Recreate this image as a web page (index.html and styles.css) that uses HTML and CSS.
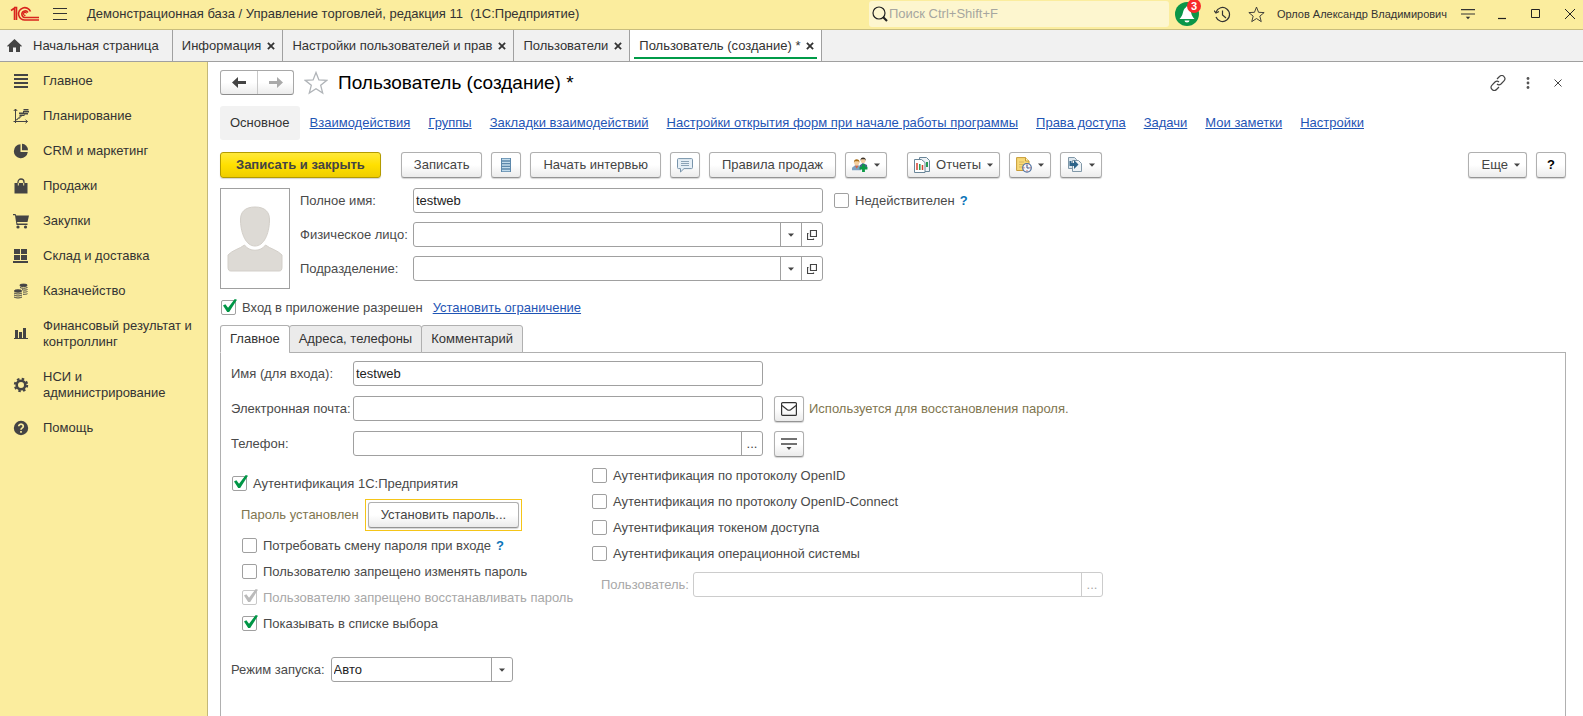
FILE: index.html
```
<!DOCTYPE html>
<html lang="ru">
<head>
    <meta charset="UTF-8">
    <meta name="viewport" content="width=device-width, initial-scale=1.0">
    <title>Пользователь (создание) *</title>
    <link rel="stylesheet" href="styles.css">
</head>
<body>
    <!-- Shared icons -->
    <svg class="sprite" aria-hidden="true">
        <symbol id="i-close" viewBox="0 0 9 9"><path d="M1 1l7 7M8 1l-7 7" stroke="currentColor" stroke-width="2" fill="none"/></symbol>
        <symbol id="i-down" viewBox="0 0 6 4"><path d="M0 0.500h6L3 3.700z" fill="currentColor"/></symbol>
        <symbol id="i-open" viewBox="0 0 10 10"><path d="M3.500 0.500h6v6h-6zM1.500 3.500h-1v6h6v-1" stroke="currentColor" fill="none" stroke-width="1.200"/></symbol>
        <symbol id="i-star" viewBox="0 0 24 24"><path d="M12 1.500l2.900 7.400 7.900.4-6.100 5 2 7.800L12 17.700l-6.700 4.400 2-7.800-6.100-5 7.900-.4z" fill="none" stroke="currentColor" stroke-width="1.300" stroke-linejoin="miter"/></symbol>
        <symbol id="i-menu" viewBox="0 0 16 12"><path d="M0 1h16M0 6h16" stroke="currentColor" stroke-width="1.300"/><path d="M5.500 9h5L8 12z" fill="currentColor"/></symbol>
    </svg>

    <header class="topbar">
        <svg class="logo" viewBox="0 0 30 16" fill="none" stroke="#d9251d">
            <path d="M1 4.500L4.500 2v12M4 1.500h2.500V14" stroke-width="1.600"/>
            <path d="M20.500 5.500A6.200 6.200 0 1 0 15.500 14H29" stroke-width="1.600"/>
            <path d="M18 6.500a3.300 3.300 0 1 0-2.500 5H29" stroke-width="1.600"/>
            <path d="M16.500 7.500a1.500 1.500 0 1 0-1 1.800" stroke-width="1.200"/>
        </svg>
        <button class="icon-btn burger" aria-label="Меню"><svg width="14" height="12" viewBox="0 0 14 12"><path d="M0 .5h14M0 5.500h14M0 11.500h14" stroke="#333"/></svg></button>
        <div class="app-title">Демонстрационная база / Управление торговлей, редакция 11 &nbsp;(1С:Предприятие)</div>
        <label class="search">
            <svg width="16" height="16" viewBox="0 0 16 16" fill="none" stroke="#222"><circle cx="7" cy="7" r="6" stroke-width="1.200"/><path d="M11 11l4 4" stroke-width="2.200"/></svg>
            <input type="text" placeholder="Поиск Ctrl+Shift+F" aria-label="Поиск">
        </label>
        <div class="top-tools">
            <button class="icon-btn bell" aria-label="Оповещения">
                <svg width="24" height="24" viewBox="0 0 24 24"><circle cx="12" cy="12" r="12" fill="#0a9648"/><path d="M12 4l1.200 1.500c1.800 1 2.300 3 3 5.500.6 2.300 1.300 4 3.300 6h-15c2-2 2.700-3.700 3.300-6 .7-2.500 1.200-4.500 3-5.500zM9.500 18.500h5a2.500 2 0 0 1-5 0z" fill="#fff"/></svg>
                <span class="badge">3</span>
            </button>
            <button class="icon-btn" aria-label="История"><svg width="17" height="17" viewBox="0 0 17 17" fill="none" stroke="#333" stroke-width="1.200"><path d="M2 6a7 7 0 1 1 0 5M8.500 4.500v4.500l3.500 3"/><path d="M0 4.500L2 7l3-1.500"/></svg></button>
            <button class="icon-btn" aria-label="Избранное"><svg width="17" height="17"><use href="#i-star"/></svg></button>
            <a class="user-name" href="#">Орлов Александр Владимирович</a>
            <button class="icon-btn" aria-label="Сервис"><svg width="14" height="14"><use href="#i-menu"/></svg></button>
            <button class="icon-btn" aria-label="Свернуть"><svg width="10" height="14" viewBox="0 0 10 14"><path d="M1 11.500h8" stroke="#222" stroke-width="1.200"/></svg></button>
            <button class="icon-btn" aria-label="Развернуть"><svg width="10" height="10" viewBox="0 0 10 10"><path d="M.5.5h8v8h-8z" fill="none" stroke="#222"/></svg></button>
            <button class="icon-btn" aria-label="Закрыть"><svg width="12" height="12" viewBox="0 0 12 12"><path d="M1 1l10 10M11 1L1 11" stroke="#222" fill="none"/></svg></button>
        </div>
    </header>

    <nav class="window-tabs">
        <a class="window-tab home" href="#"><svg width="15" height="13" viewBox="0 0 15 13"><path d="M7.500 0L15 7l-1 .8-1-.8v6H9V8.500H6V13H2V7l-1 .8L0 7z" fill="#444"/></svg>Начальная страница</a>
        <a class="window-tab" href="#">Информация<svg width="8" height="8"><use href="#i-close"/></svg></a>
        <a class="window-tab" href="#">Настройки пользователей и прав<svg width="8" height="8"><use href="#i-close"/></svg></a>
        <a class="window-tab" href="#">Пользователи<svg width="8" height="8"><use href="#i-close"/></svg></a>
        <a class="window-tab active" href="#">Пользователь (создание) *<svg width="8" height="8"><use href="#i-close"/></svg></a>
    </nav>

    <div class="workspace">
        <nav class="sidebar">
            <a href="#"><svg viewBox="0 0 16 16"><path d="M1 2h14M1 6h14M1 10h14M1 14h14" stroke="#444" stroke-width="2"/></svg>Главное</a>
            <a href="#"><svg viewBox="0 0 16 16"><path d="M2.500 1v14M.5 13.500h14M.8 3l1.700-2 1.700 2M12.500 11.800l2 1.700-2 1.700M3 12l2-1v-1h2V8h2" fill="none" stroke="#444"/><path d="M6 4.500h5v1.500H6zM6.500 6.500h5V8h-5zM10.500 1h5v1.500h-5zM10 3h6v1.500h-6zM11 5h4v1.500h-4z" fill="#444"/></svg>Планирование</a>
            <a href="#"><svg viewBox="0 0 16 16"><path d="M7.500 1.200A7 7 0 1 0 14.800 9H7.500z" fill="#444"/><path d="M9 0.800A6.500 6.500 0 0 1 15 7.200H9z" fill="#444"/></svg>CRM и маркетинг</a>
            <a href="#"><svg viewBox="0 0 16 16"><path d="M1.500 5h13v10.500h-13z" fill="#444"/><path d="M5 7V4a3 3 0 0 1 6 0v3" fill="none" stroke="#444" stroke-width="1.300"/><path d="M5.300 5v2.500M10.700 5v2.500" stroke="#fbed9e"/></svg>Продажи</a>
            <a href="#"><svg viewBox="0 0 16 16"><path d="M0 1h2.500l.7 1.500H16L14.500 9H4l.5 1.500h10V12H3.500L2 2.300H0z" fill="#444"/><path d="M3.500 3H15l-1.200 5.500H4.300z" fill="#444"/><circle cx="5" cy="14" r="1.600" fill="#444"/><circle cx="12.500" cy="14" r="1.600" fill="#444"/></svg>Закупки</a>
            <a href="#"><svg viewBox="0 0 16 16"><path d="M1 1h6v5H1zM8 1h6v5H8zM1 7h6v5H1zM8 7h6v5H8zM0 13h15v2H0z" fill="#444"/></svg>Склад и доставка</a>
            <a href="#"><svg viewBox="0 0 16 16" fill="none" stroke="#444"><ellipse cx="10.500" cy="2.300" rx="3.700" ry="1.200" fill="#444"/><path d="M7 4.500c2 1 5 1 7.500 0M9 6.700c2 .6 4 .5 5.500-.2M10 9c1.500.3 3.500 0 4.500-.5M10 11.200c1.500.3 3.500 0 4.500-.5"/><ellipse cx="5" cy="8" rx="3.700" ry="1.200" fill="#444"/><path d="M1 10c2 1.300 6 1.300 8 0M1 12c2 1.300 6 1.300 8 0M1 14c2 1.300 6 1.300 8 0"/></svg>Казначейство</a>
            <a href="#"><svg viewBox="0 0 16 16"><path d="M2 4h3v8H2zM6 6h3v6H6zM10 2h3v10h-3zM1 12h14v1H1z" fill="#444"/></svg>Финансовый результат и контроллинг</a>
            <a href="#"><svg viewBox="0 0 16 16" fill="none" stroke="#444"><circle cx="8" cy="8" r="4.300" stroke-width="2.600"/><circle cx="8" cy="8" r="6.200" stroke-width="2" stroke-dasharray="2.500 2.369"/></svg>НСИ и администрирование</a>
            <a href="#"><svg viewBox="0 0 16 16"><circle cx="8" cy="8" r="7.200" fill="#444"/><path d="M5.700 6.200a2.300 2.100 0 1 1 3.400 1.900c-.8.5-1.100.8-1.100 1.700M8 11v1.800" fill="none" stroke="#fbed9e" stroke-width="1.700"/></svg>Помощь</a>
        </nav>

        <main class="form">
            <div class="form-head">
                <div class="history">
                    <button aria-label="Назад"><svg width="14" height="11" viewBox="0 0 14 11"><path d="M0 5.500L6 0v4h8v3H6v4z" fill="#444"/></svg></button>
                    <button aria-label="Вперед"><svg width="14" height="11" viewBox="0 0 14 11"><path d="M14 5.500L8 0v4H0v3h8v4z" fill="#aaa"/></svg></button>
                </div>
                <button class="icon-btn favorite" aria-label="В избранное"><svg width="24" height="24"><use href="#i-star"/></svg></button>
                <h1>Пользователь (создание) *</h1>
                <div class="head-tools">
                    <button class="icon-btn" aria-label="Ссылка"><svg width="16" height="16" viewBox="0 0 16 16" fill="none" stroke="#444" stroke-width="1.200"><path d="M7 4l2.500-2.500a3 3 0 0 1 4.700.300 3 3 0 0 1-.2 4L11 9a3 3 0 0 1-4 0M9 12l-2.500 2.500a3 3 0 0 1-4.700-.300 3 3 0 0 1 .2-4L5 7a3 3 0 0 1 4 0"/></svg></button>
                    <button class="icon-btn" aria-label="Еще"><svg width="4" height="12" viewBox="0 0 4 12" fill="#555"><circle cx="2" cy="1.500" r="1.400"/><circle cx="2" cy="6" r="1.400"/><circle cx="2" cy="10.500" r="1.400"/></svg></button>
                    <button class="icon-btn" aria-label="Закрыть форму"><svg width="8" height="8" viewBox="0 0 8 8"><path d="M.5.5l7 7M7.500.5l-7 7" stroke="#444" fill="none"/></svg></button>
                </div>
            </div>

            <nav class="form-nav">
                <span class="current">Основное</span>
                <a href="#">Взаимодействия</a>
                <a href="#">Группы</a>
                <a href="#">Закладки взаимодействий</a>
                <a href="#">Настройки открытия форм при начале работы программы</a>
                <a href="#">Права доступа</a>
                <a href="#">Задачи</a>
                <a href="#">Мои заметки</a>
                <a href="#">Настройки</a>
            </nav>

            <div class="toolbar">
                <button class="btn primary">Записать и закрыть</button>
                <button class="btn">Записать</button>
                <button class="btn square" aria-label="Список"><svg width="10" height="14" viewBox="0 0 10 14"><path d="M0 0h10v14H0z" fill="#5d88ab"/><path d="M1 1.500h8M1 4.300h8M1 7h8M1 9.700h8M1 12.500h8" stroke="#c3dcec" stroke-width="1.300"/></svg></button>
                <button class="btn">Начать интервью</button>
                <button class="btn square" aria-label="Обсуждение"><svg width="16" height="15" viewBox="0 0 16 15"><path d="M1.500.6h13a1 1 0 0 1 1 1v8a1 1 0 0 1-1 1H7L3.500 14v-3.400h-2a1 1 0 0 1-1-1v-8a1 1 0 0 1 1-1z" fill="#e6eff6" stroke="#7894ab"/><path d="M4 3.500h8M4 5.500h8M4 7.500h8" stroke="#8ba3b6"/></svg></button>
                <button class="btn">Правила продаж</button>
                <button class="btn menu" aria-label="Участники">
                    <svg width="16" height="16" viewBox="0 0 17 16"><path d="M8 11V8.500L11.500 6 16 8v4H8z" fill="#47658b"/><circle cx="11.800" cy="3.500" r="2.600" fill="#f3cfa3"/><path d="M9 3.500C9 1 10 0 11.800 0s2.900 1 2.900 3.500L13.500 2H10z" fill="#3c3227"/><path d="M0 13.500V11l3-2.500h4L9.500 11v2.500z" fill="#7da2c3"/><path d="M3 8.500h4L5 12z" fill="#d46745"/><circle cx="5" cy="5.500" r="2.700" fill="#f5d0a0"/><path d="M2 5.500C2 3 3.200 2 5 2s3 1 3 3.500L6.800 4H3z" fill="#a86e18"/><path d="M8 9.800h2.700V7.200h3v2.600h2.700v3h-2.700v2.700h-3v-2.700H8z" fill="#0b9a45"/></svg>
                    <svg width="6" height="4"><use href="#i-down"/></svg>
                </button>
                <button class="btn menu reports">
                    <svg width="16" height="16" viewBox="0 0 16 16"><path d="M5.500.5h7l3 3v11h-10z" fill="#eef3f6" stroke="#6a8699"/><path d="M12 5h2v5h-2z" fill="#259a51"/><path d="M.5 2.500h7l3.500 3v10H.5z" fill="#fff" stroke="#6a8699"/><path d="M3 6v7M8.500 8v5" stroke="#d8412f" stroke-width="1.500"/><path d="M5.800 7v6" stroke="#259a51" stroke-width="1.500"/></svg>
                    Отчеты
                    <svg width="6" height="4"><use href="#i-down"/></svg>
                </button>
                <button class="btn menu" aria-label="Напоминание">
                    <svg width="16" height="16" viewBox="0 0 16 16"><path d="M.6.600h9L13 4v9.500H.6z" fill="#f7d978" stroke="#c89c37"/><path d="M9.500.6V4H13" fill="#fff2bd" stroke="#c89c37"/><path d="M3 5h5M3 7.500h4M3 10h3" stroke="#d9b65c"/><circle cx="11" cy="10.800" r="4.300" fill="#f2f6fc" stroke="#4e719f" stroke-width="1.200"/><path d="M11 8v3h2.300" fill="none" stroke="#3b5a8b"/><path d="M11 7.300v1M11 13.300v1M7.500 10.800h1M13.500 10.800h1" stroke="#d23c2b"/></svg>
                    <svg width="6" height="4"><use href="#i-down"/></svg>
                </button>
                <button class="btn menu" aria-label="Создать на основании">
                    <svg width="16" height="16" viewBox="0 0 16 16"><path d="M1.500.5h6l2 2v9h-8z" fill="#dce6ed" stroke="#8198a8"/><path d="M5.500 3.500h6l3 3v8h-9z" fill="#eef3f6" stroke="#8198a8"/><path d="M2.500 4v5H7v3l4.500-4.500L7 3v3H4.500V4z" fill="#2c6389"/></svg>
                    <svg width="6" height="4"><use href="#i-down"/></svg>
                </button>
                <button class="btn menu more">Еще<svg width="6" height="4"><use href="#i-down"/></svg></button>
                <button class="btn square help">?</button>
            </div>

            <section class="person">
                <div class="photo">
                    <svg width="56" height="66" viewBox="0 0 56 66" fill="#dddad5" stroke="#d3cfc9"><path d="M28 1C18 1 13 6 13.500 15 14 28 19 40 28 40s14-12 14.500-25C43 6 38 1 28 1z"/><path d="M17.500 39C22 46 34 46 38.500 39c5 4 12 5 16.500 10v12c0 3-1 4-3 4H4c-2 0-3-1-3-4V49c4.500-5 11.500-6 16.500-10z"/></svg>
                </div>
                <div class="rows person-rows">
                    <div class="field">
                        <label for="full-name">Полное имя:</label>
                        <div class="box"><input type="text" id="full-name" value="testweb"></div>
                        <label class="check"><input type="checkbox">Недействителен</label>
                        <a class="hint-mark" href="#">?</a>
                    </div>
                    <div class="field">
                        <label for="individual">Физическое лицо:</label>
                        <div class="box">
                            <input type="text" id="individual">
                            <button aria-label="Выбрать"><svg width="6" height="4"><use href="#i-down"/></svg></button>
                            <button aria-label="Открыть"><svg width="10" height="10"><use href="#i-open"/></svg></button>
                        </div>
                    </div>
                    <div class="field">
                        <label for="department">Подразделение:</label>
                        <div class="box">
                            <input type="text" id="department">
                            <button aria-label="Выбрать"><svg width="6" height="4"><use href="#i-down"/></svg></button>
                            <button aria-label="Открыть"><svg width="10" height="10"><use href="#i-open"/></svg></button>
                        </div>
                    </div>
                </div>
            </section>

            <div class="access">
                <label class="check"><input type="checkbox" checked>Вход в приложение разрешен</label>
                <a href="#">Установить ограничение</a>
            </div>

            <div class="page-tabs">
                <button class="page-tab active">Главное</button>
                <button class="page-tab">Адреса, телефоны</button>
                <button class="page-tab">Комментарий</button>
            </div>

            <section class="panel">
                <div class="rows panel-rows">
                    <div class="field">
                        <label for="login">Имя (для входа):</label>
                        <div class="box"><input type="text" id="login" value="testweb"></div>
                    </div>
                    <div class="field">
                        <label for="email">Электронная почта:</label>
                        <div class="box"><input type="text" id="email"></div>
                        <button class="btn square" aria-label="Написать письмо"><svg width="16" height="14" viewBox="0 0 16 14" fill="none" stroke="#333" stroke-width="1.200"><rect x=".6" y=".6" width="14.800" height="12.800" rx="1"/><path d="M1 3.500l5 4q2 1.500 4 0l5-4"/></svg></button>
                        <span class="note">Используется для восстановления пароля.</span>
                    </div>
                    <div class="field">
                        <label for="phone">Телефон:</label>
                        <div class="box">
                            <input type="text" id="phone">
                            <button aria-label="Выбрать">...</button>
                        </div>
                        <button class="btn square" aria-label="Действия"><svg width="16" height="12"><use href="#i-menu"/></svg></button>
                    </div>
                </div>

                <div class="auth">
                    <div class="auth-left">
                        <label class="check"><input type="checkbox" checked>Аутентификация 1С:Предприятия</label>
                        <div class="password">
                            <span class="note">Пароль установлен</span>
                            <div class="focus-ring"><button class="btn">Установить пароль...</button></div>
                        </div>
                        <div class="checks">
                            <div class="check-line">
                                <label class="check"><input type="checkbox">Потребовать смену пароля при входе</label>
                                <a class="hint-mark" href="#">?</a>
                            </div>
                            <label class="check"><input type="checkbox">Пользователю запрещено изменять пароль</label>
                            <label class="check disabled"><input type="checkbox" checked disabled>Пользователю запрещено восстанавливать пароль</label>
                            <label class="check"><input type="checkbox" checked>Показывать в списке выбора</label>
                        </div>
                    </div>
                    <div class="auth-right">
                        <label class="check"><input type="checkbox">Аутентификация по протоколу OpenID</label>
                        <label class="check"><input type="checkbox">Аутентификация по протоколу OpenID-Connect</label>
                        <label class="check"><input type="checkbox">Аутентификация токеном доступа</label>
                        <label class="check"><input type="checkbox">Аутентификация операционной системы</label>
                        <div class="field os-user">
                            <label for="os-user">Пользователь:</label>
                            <div class="box">
                                <input type="text" id="os-user" disabled>
                                <button aria-label="Выбрать" disabled>...</button>
                            </div>
                        </div>
                    </div>
                </div>

                <div class="field launch">
                    <label for="launch-mode">Режим запуска:</label>
                    <div class="box">
                        <select id="launch-mode">
                            <option>Авто</option>
                        </select>
                        <span class="arrow"><svg width="6" height="4"><use href="#i-down"/></svg></span>
                    </div>
                </div>
            </section>
        </main>
    </div>
</body>
</html>
```

FILE: styles.css
```
* {
    box-sizing: border-box;
}

body {
    display: flex;
    flex-direction: column;
    height: 100vh;
    margin: 0;
    overflow: hidden;
    background-color: #fff;
    color: #4a4a4a;
    font-family: "Liberation Sans", Arial, sans-serif;
    font-size: 13px;
    line-height: 16px;
}

button,
input,
select {
    margin: 0;
    padding: 0;
    border: none;
    background: none;
    color: inherit;
    font: inherit;
}

button svg,
a svg {
    flex: none;
}

a {
    color: #1f55b5;
}

.sprite {
    display: none;
}

.icon-btn {
    display: flex;
    align-items: center;
    justify-content: center;
    color: #333;
}

/* Top bar */
.topbar {
    display: flex;
    flex: none;
    align-items: center;
    height: 30px;
    padding: 0 3px 1px 10px;
    background-color: #fbed9e;
    border-bottom: 1px solid #c8bd7e;
    color: #333;
}

.logo {
    width: 30px;
    height: 16px;
}

.burger {
    width: 14px;
    margin: 0 20px 0 13px;
}

.app-title {
    flex: 1;
    white-space: nowrap;
}

.search {
    display: flex;
    align-items: center;
    gap: 1px;
    width: 300px;
    height: 26px;
    padding: 0 3px;
    background-color: #fdf6cf;
    border-radius: 3px;
}

.search input {
    flex: 1;
    min-width: 0;
    outline: none;
}

.search input::placeholder {
    color: #a6a6a0;
}

.top-tools {
    display: flex;
    align-items: center;
    gap: 13px;
    margin-left: 6px;
}

.top-tools .icon-btn {
    width: 21px;
}

.top-tools .bell {
    position: relative;
    width: 24px;
    height: 24px;
}

.badge {
    position: absolute;
    top: -3px;
    right: -2px;
    width: 14px;
    height: 14px;
    background-color: #f72b2b;
    border-radius: 50%;
    color: #fff;
    font-size: 11px;
    font-weight: bold;
    line-height: 14px;
}

.user-name {
    margin: 0 -3px;
    color: #333;
    font-size: 11px;
    text-decoration: none;
    white-space: nowrap;
}

/* Window tabs */
.window-tabs {
    display: flex;
    flex: none;
    height: 32px;
    background-color: #f1f1f1;
    border-bottom: 1px solid #a0a0a0;
}

.window-tab {
    display: flex;
    align-items: center;
    gap: 6px;
    padding: 0 7px 0 9px;
    border-right: 1px solid #a0a0a0;
    color: #333;
    text-decoration: none;
    white-space: nowrap;
}

.window-tab.home {
    gap: 11px;
    padding: 0 13px 0 7px;
}

.window-tab.active {
    background: linear-gradient(#009b48, #009b48) center bottom 2px / calc(100% - 8px) 2px no-repeat #fff;
}

.workspace {
    display: flex;
    flex: 1;
    min-height: 0;
}

/* Sections panel */
.sidebar {
    flex: none;
    width: 208px;
    padding-top: 2px;
    background-color: #fbed9e;
    border-right: 1px solid #c4b878;
}

.sidebar a {
    display: flex;
    align-items: center;
    gap: 14px;
    min-height: 35px;
    padding: 9px 14px 10px 13px;
    color: #333;
    text-decoration: none;
}

.sidebar svg {
    width: 16px;
    height: 16px;
}

/* Form */
.form {
    display: flex;
    flex: 1;
    flex-direction: column;
    min-width: 0;
    padding: 8px 17px 0 12px;
}

.form-head {
    display: flex;
    align-items: center;
    height: 25px;
}

.history {
    display: flex;
    height: 25px;
    border: 1px solid #a8a8a8;
    border-bottom-color: #8c8c8c;
    border-radius: 3px;
    background: linear-gradient(#fff 50%, #ececec);
}

.history button {
    display: flex;
    align-items: center;
    justify-content: center;
    width: 36px;
}

.history button + button {
    border-left: 1px solid #c8c8c8;
}

.favorite {
    margin: 0 10px;
    color: #b0b4b8;
}

h1 {
    margin: 0;
    color: #000;
    font-size: 19px;
    font-weight: normal;
    line-height: 24px;
}

.head-tools {
    display: flex;
    align-items: center;
    gap: 14px;
    margin-left: auto;
}

.head-tools .icon-btn {
    width: 16px;
}

.form-nav {
    display: flex;
    align-items: center;
    gap: 18px;
    height: 34px;
    margin-top: 11px;
    white-space: nowrap;
}

.form-nav .current {
    margin-right: -8px;
    padding: 9px 10px;
    background-color: #f2f2f2;
    border-radius: 3px;
    color: #333;
}

.toolbar {
    display: flex;
    gap: 9px;
    margin-top: 12px;
}

.btn {
    display: flex;
    align-items: center;
    justify-content: center;
    height: 26px;
    padding: 0 12px;
    border: 1px solid #b0b0b0;
    border-bottom-color: #949494;
    border-radius: 3px;
    background: linear-gradient(#fff 50%, #ebebeb);
    box-shadow: 0 1px 1px #d4d4d4;
    color: #444;
    white-space: nowrap;
}

.btn.primary {
    margin-right: 11px;
    padding: 0 15px;
    border-color: #b39b00;
    background: linear-gradient(#ffe93a, #ffe000 50%, #efcd00);
    font-weight: bold;
}

.btn.square {
    flex: none;
    width: 30px;
    padding: 0;
}

.btn.menu {
    gap: 6px;
    padding: 0 6px;
}

.btn.reports {
    margin-left: 11px;
}

.btn.more {
    margin-left: auto;
    padding: 0 6px 0 13px;
}

.btn.help {
    color: #000;
    font-weight: bold;
}

/* Fields */
.rows {
    display: flex;
    flex-direction: column;
}

.field {
    display: flex;
    align-items: center;
    height: 25px;
}

.box {
    display: flex;
    width: 410px;
    height: 25px;
    border: 1px solid #a0a0a0;
    border-radius: 3px;
    color: #222;
}

.box input,
.box select {
    flex: 1;
    min-width: 0;
    padding: 0 2px;
    outline: none;
    appearance: none;
}

.box button,
.box .arrow {
    display: flex;
    align-items: center;
    justify-content: center;
    width: 21px;
    border-left: 1px solid #a0a0a0;
    color: #444;
}

.check {
    display: flex;
    align-items: center;
    gap: 6px;
    height: 15px;
    white-space: nowrap;
}

.check input {
    position: relative;
    flex: none;
    width: 15px;
    height: 15px;
    border: 1px solid #a0a0a0;
    border-radius: 2px;
    appearance: none;
}

.check input:checked::after {
    content: "";
    position: absolute;
    top: -2px;
    left: 1px;
    width: 14px;
    height: 13px;
    background-color: #009646;
    clip-path: polygon(0 50%, 17% 40%, 36% 68%, 84% 0, 100% 6%, 44% 100%, 30% 100%);
}

.check.disabled {
    color: #a8a8a8;
}

.check.disabled input {
    border-color: #c8c8c8;
}

.check.disabled input:checked::after {
    background-color: #bbb;
}

.hint-mark {
    margin-left: 5px;
    color: #0b74b8;
    font-weight: bold;
    text-decoration: none;
}

.note {
    color: #7f7650;
}

.person {
    display: flex;
    gap: 10px;
    margin-top: 10px;
}

.photo {
    display: flex;
    align-items: center;
    justify-content: center;
    width: 70px;
    height: 101px;
    border: 1px solid #a0a0a0;
}

.person-rows {
    gap: 9px;
}

.person-rows .field > label:first-child {
    width: 113px;
}

.person-rows .check {
    margin-left: 11px;
}

.access {
    display: flex;
    align-items: center;
    gap: 10px;
    height: 15px;
    margin: 11px 0 10px 1px;
}

/* Form pages */
.page-tabs {
    display: flex;
    flex: none;
    height: 28px;
}

.page-tab {
    position: relative;
    margin-left: -1px;
    padding: 0 9px;
    border: 1px solid #b0b0b0;
    border-radius: 3px 3px 0 0;
    background-color: #ebebeb;
    color: #333;
}

.page-tab.active {
    margin-left: 0;
    border-bottom-color: #fff;
    background-color: #fff;
}

.panel {
    flex: 1;
    margin-top: -1px;
    padding: 8px 10px 0;
    border: 1px solid #b0b0b0;
    border-bottom: none;
}

.panel-rows {
    gap: 10px;
}

.panel-rows .field > label {
    width: 122px;
}

.panel-rows .btn {
    margin: 0 5px 0 11px;
}

.auth {
    display: flex;
    margin-top: 12px;
}

.auth-left {
    width: 361px;
    padding: 8px 0 0 1px;
}

.password {
    display: flex;
    align-items: center;
    gap: 6px;
    height: 33px;
    margin: 7px 0 7px 9px;
}

.focus-ring {
    padding: 2px;
    border: 1px solid #f5c518;
}

.checks,
.auth-right {
    display: flex;
    flex-direction: column;
    align-items: flex-start;
    gap: 11px;
}

.checks {
    margin-left: 10px;
}

.check-line {
    display: flex;
    align-items: center;
    height: 15px;
}

.os-user {
    gap: 4px;
    padding-left: 9px;
    color: #a8a8a8;
}

.os-user .box,
.os-user .box button {
    border-color: #ccc;
    color: #a8a8a8;
}

.launch {
    gap: 6px;
    margin-top: 26px;
}

.launch .box {
    width: 182px;
}
```
